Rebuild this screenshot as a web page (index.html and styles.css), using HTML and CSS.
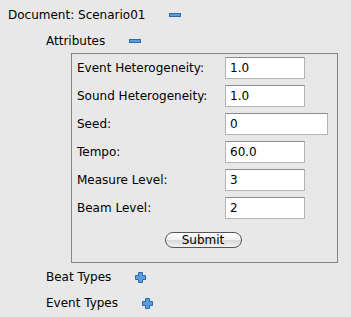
FILE: index.html
```html
<!DOCTYPE html>
<html lang="en">
<head>
  <meta charset="UTF-8" />
  <title>Scenario01</title>
  <link rel="stylesheet" href="styles.css">
</head>
<body>
  <div class="tree">
    <div class="node-row doc">
      <span class="node-label">Document: Scenario01</span>
      <svg class="toggle minus" width="12" height="4" viewBox="0 0 12 4"><rect x="0.5" y="0.5" width="11" height="3" fill="#5b9ddc" stroke="#2f68a8"/></svg>
    </div>

    <div class="children">
      <div class="node-row">
        <span class="node-label">Attributes</span>
        <svg class="toggle minus" width="12" height="4" viewBox="0 0 12 4"><rect x="0.5" y="0.5" width="11" height="3" fill="#5b9ddc" stroke="#2f68a8"/></svg>
      </div>

      <div class="attr-box">
        <div class="attr-grid">
          <label for="eventHet">Event Heterogeneity:</label>
          <input type="text" id="eventHet" value="1.0">
          <label for="soundHet">Sound Heterogeneity:</label>
          <input type="text" id="soundHet" value="1.0">
          <label for="seed">Seed:</label>
          <input type="text" id="seed" class="wide" value="0">
          <label for="tempo">Tempo:</label>
          <input type="text" id="tempo" value="60.0">
          <label for="measure">Measure Level:</label>
          <input type="text" id="measure" value="3">
          <label for="beam">Beam Level:</label>
          <input type="text" id="beam" value="2">
        </div>
        <div class="actions">
          <button type="button">Submit</button>
        </div>
      </div>

      <div class="node-row">
        <span class="node-label">Beat Types</span>
        <svg class="toggle plus" width="11" height="11" viewBox="0 0 11 11"><path d="M3.5 0.5H7.5V3.5H10.5V7.5H7.5V10.5H3.5V7.5H0.5V3.5H3.5Z" fill="#5b9ddc" stroke="#2f68a8"/></svg>
      </div>
      <div class="node-row">
        <span class="node-label">Event Types</span>
        <svg class="toggle plus" width="11" height="11" viewBox="0 0 11 11"><path d="M3.5 0.5H7.5V3.5H10.5V7.5H7.5V10.5H3.5V7.5H0.5V3.5H3.5Z" fill="#5b9ddc" stroke="#2f68a8"/></svg>
      </div>
    </div>
  </div>
</body>
</html>
```

FILE: styles.css
```css
body {
  margin: 0;
  padding: 3px 0 0 0;
  background: #e8e8e8;
  color: #000;
  font-family: 'DejaVu Sans', 'Noto Sans', sans-serif;
  font-size: 12px;
}
.tree {
  padding-left: 8px;
}
.node-row {
  display: flex;
  align-items: center;
  height: 24px;
}
.node-label {
  margin-right: 24px;
}
.children {
  padding-left: 38px;
}
.children > .node-row {
  margin-top: 2px;
}
.attr-box {
  width: 260px;
  margin-left: 25px;
  border: 1px solid #858585;
  padding: 3px 0 14px 5px;
}
.attr-grid {
  display: grid;
  grid-template-columns: 148px auto;
  row-gap: 6px;
  align-items: center;
}
.attr-grid input {
  width: 80px;
  height: 22px;
  box-sizing: border-box;
  border: 1px solid #b4b4b4;
  border-top-color: #8c8c8c;
  background: #fff;
  padding: 0 4px;
  font-family: 'DejaVu Sans', sans-serif;
  font-size: 12px;
  outline: none;
}
.attr-grid input.wide {
  width: 103px;
}
.actions {
  display: flex;
  justify-content: center;
  margin-top: 13px;
  padding-right: 8px;
}
button {
  width: 77px;
  height: 16px;
  padding: 0;
  border: 1px solid #555;
  border-radius: 8px;
  background: linear-gradient(#ffffff, #f0f0f0 50%, #d8d8d8 51%, #f2f2f2);
  font-family: 'DejaVu Sans', sans-serif;
  font-size: 12px;
  line-height: 14px;
  color: #000;
}
```
